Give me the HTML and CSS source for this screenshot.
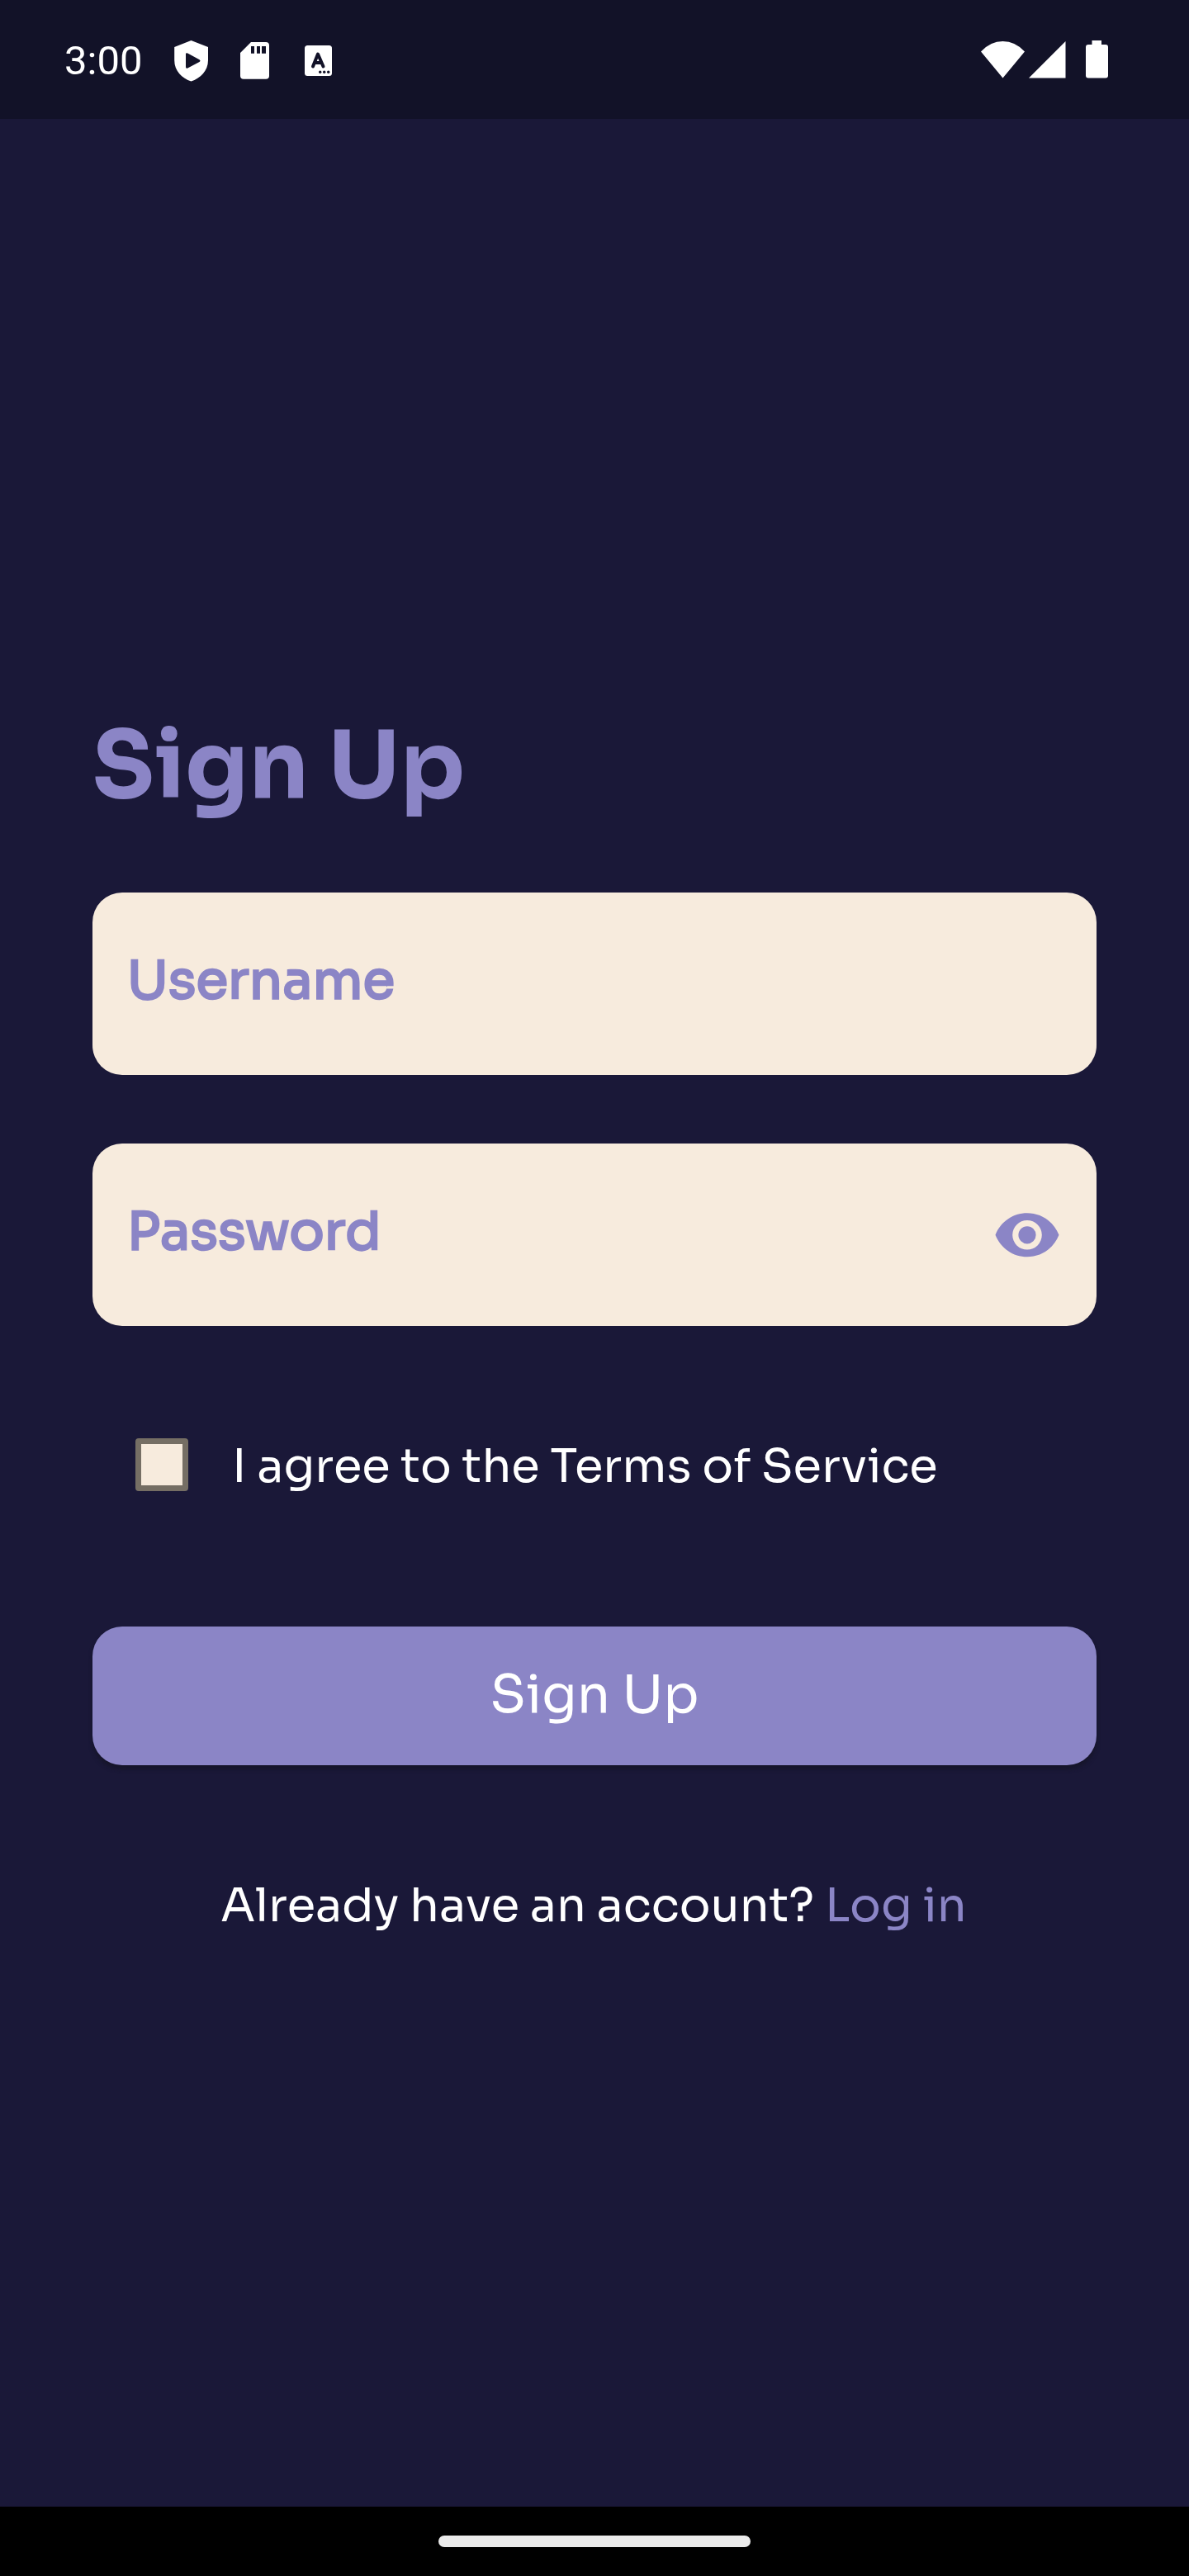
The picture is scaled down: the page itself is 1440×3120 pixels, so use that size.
FILE: index.html
```html
<!DOCTYPE html>
<html lang="en">
<head>
<meta charset="utf-8">
<title>Sign Up</title>
<link rel="stylesheet" href="styles.css">
</head>
<body>
<div class="screen">
  <header class="status-bar">
    <span class="clock">3:00</span>
    <div class="notifications">
      <svg class="icon-shield" width="42" height="50" viewBox="0 0 42 50"><path fill="#fff" fill-rule="evenodd" d="M20.5 0 41 8V24C41 37 31.500 46 20.500 49.500 9.500 46 .200 37 .200 24V8ZM14 16.500V32Q14 34.500 16.300 33.400L30.500 26Q32.500 24.600 30.500 23.200L16.300 15.600Q14 14.600 14 16.500Z"/></svg>
      <svg class="icon-sd" width="35" height="45" viewBox="0 0 35 45"><path fill="#fff" fill-rule="evenodd" d="M13 0H31Q35 0 35 4V41Q35 44.700 31 44.700H4Q0 44.700 0 41V13ZM13 5V13.700H17V5ZM20 5V13.700H24V5ZM26 5V13.700H31V5Z"/></svg>
      <svg class="icon-letter" width="33" height="37" viewBox="0 0 33 37"><rect width="33" height="37" rx="3.500" fill="#fff"/><path d="M10 25.500 16 10.500 22.500 25.500M12.500 21H20" fill="none" stroke="#121228" stroke-width="4" stroke-linecap="round" stroke-linejoin="round"/><g fill="#121228"><circle cx="18.700" cy="32.300" r="1.700"/><circle cx="23.700" cy="32.300" r="1.700"/><circle cx="28.700" cy="32.300" r="1.700"/></g></svg>
    </div>
    <div class="system">
      <svg class="icon-wifi" width="53" height="45" viewBox="0 0 53 45"><path fill="#fff" d="M0 12.500Q11.500 0 26.500 0T53 12.500L26.500 44.500Z"/></svg>
      <svg class="icon-signal" width="45" height="45" viewBox="0 0 45 45"><path fill="#fff" d="M44.500 0V44.500H0Z"/></svg>
      <svg class="icon-battery" width="27" height="46" viewBox="0 0 27 46"><path fill="#fff" d="M7.500 0H19V5H24Q27 5 27 8V42.500Q27 45.500 24 45.500H3Q0 45.500 0 42.500V8Q0 5 3 5H7.500Z"/></svg>
    </div>
  </header>

  <main class="content">
    <h1 class="title">Sign Up</h1>
    <div class="field"><span class="label">Username</span></div>
    <div class="field"><span class="label">Password</span>
      <svg class="icon-eye" width="78" height="54" viewBox="0 0 78 54"><path fill="#8b85c6" fill-rule="evenodd" d="M.500 26.700C7 10.500 22 .300 39 .300S71 10.500 77.500 26.700C71 43 56 53.200 39 53.200S7 43 .500 26.700ZM39 9A17.800 17.800 0 1 0 39 44.600 17.800 17.800 0 1 0 39 9ZM39 16.200A10.600 10.600 0 1 1 39 37.400 10.600 10.600 0 1 1 39 16.200Z"/></svg>
    </div>
    <div class="terms"><span class="checkbox"></span><span class="terms-text">I agree to the Terms of Service</span></div>
    <div class="button">Sign Up</div>
    <div class="login">Already have an account? <span class="login-link">Log in</span></div>
  </main>

  <footer class="nav-bar"><span class="handle"></span></footer>
</div>
</body>
</html>
```
FILE: styles.css
```css
* { box-sizing: border-box; }
body { margin: 0; background: #1a1838; }
svg { display: block; flex: none; }

.screen {
  display: flex;
  flex-direction: column;
  width: 1440px;
  height: 3120px;
  background: #1a1838;
  font-family: Sora, Inter, sans-serif;
  color: #fff;
}

.status-bar {
  display: flex;
  align-items: flex-start;
  height: 144px;
  padding-left: 78px;
  background: #121228;
}
.clock {
  width: 133px;
  padding-top: 45px;
  font: 400 49px/58px Roboto, sans-serif;
}
.notifications { display: flex; flex: 1; padding-top: 49px; }
.icon-sd { margin: 2px 43px 0 38px; }
.icon-letter { margin-top: 6px; }
.system { display: flex; padding: 49px 98px 0 0; }
.icon-wifi { margin-top: 1px; }
.icon-signal { margin: 1px 24px 0 5px; }

.content {
  display: flex;
  flex: 1;
  flex-direction: column;
  padding: 714px 112px 0;
}
.title {
  margin: 0 0 83px;
  font-size: 112px;
  font-weight: 700;
  line-height: 140px;
  color: #8b85c6;
}
.field {
  display: flex;
  align-items: center;
  justify-content: space-between;
  height: 221px;
  margin-bottom: 83px;
  padding: 0 45px 0 42px;
  border-radius: 36px;
  background: #f7ebdd;
  color: #8b85c6;
}
.label {
  padding-bottom: 8px;
  font-size: 63px;
  line-height: 80px;
  -webkit-text-stroke: 2.6px #8b85c6;
}

.terms {
  display: flex;
  align-items: center;
  height: 168px;
  margin-bottom: 112px;
  padding-left: 52px;
}
.field + .terms { margin-top: 1px; }
.checkbox {
  width: 64px;
  height: 64px;
  margin-right: 53px;
  border: 7px solid #756e64;
  border-radius: 4px;
  background: #f7ebdd;
}
.terms-text {
  padding-top: 4px;
  font-size: 56px;
  line-height: 70px;
}
.button {
  height: 168px;
  margin-bottom: 135px;
  border-radius: 36px;
  background: #8b85c6;
  box-shadow: 0 5px 5px rgba(20, 20, 36, .7);
  font-size: 63px;
  line-height: 165px;
  text-align: center;
}
.login {
  padding-left: 155px;
  font-size: 56px;
  line-height: 70px;
  white-space: nowrap;
}
.login-link { color: #8b85c6; }

.nav-bar {
  display: flex;
  justify-content: center;
  height: 84px;
  padding-top: 35px;
  background: #000;
}
.handle {
  width: 378px;
  height: 14px;
  border-radius: 7px;
  background: #ebebeb;
}
```
